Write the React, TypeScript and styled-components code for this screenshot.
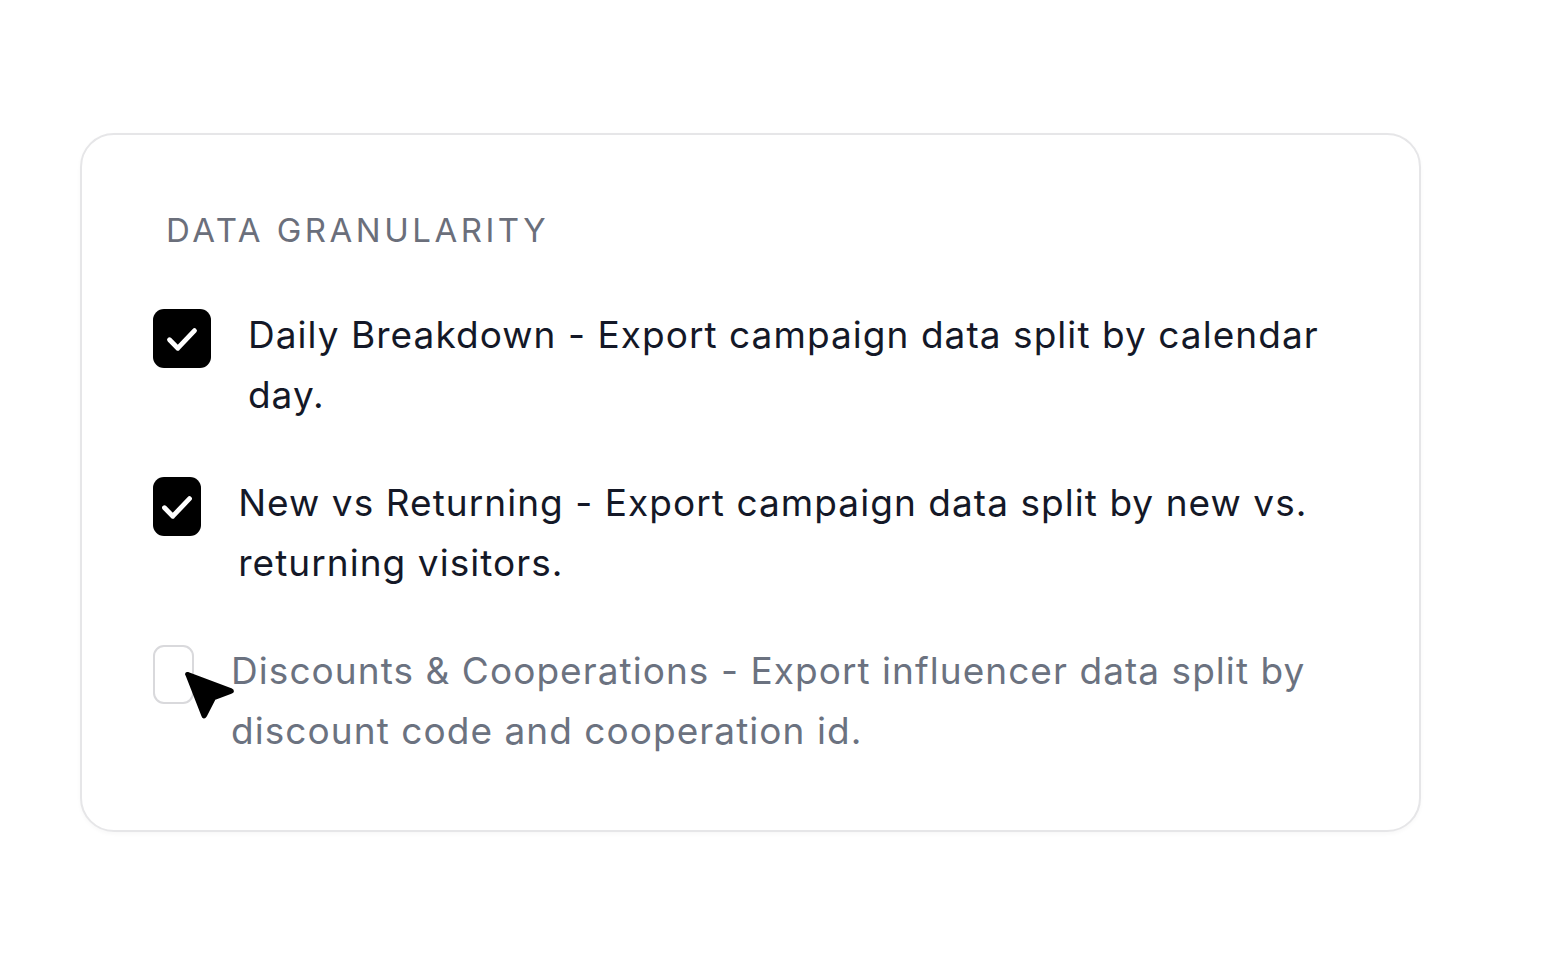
import React, { useState } from 'react'
import styled, { createGlobalStyle } from 'styled-components'

const GlobalStyle = createGlobalStyle`
  html, body {
    margin: 0;
    padding: 0;
    background: #ffffff;
    font-family: Inter, 'Noto Sans', sans-serif;
  }
`

const Page = styled.div`
  width: 1560px;
  height: 960px;
  padding: 133px 0 0 80px;
  box-sizing: border-box;
`

const Card = styled.section`
  position: relative;
  width: 1341px;
  box-sizing: border-box;
  border: 2px solid #e6e6e8;
  border-radius: 34px;
  background: #ffffff;
  box-shadow: 0 2px 4px rgba(0, 0, 0, 0.03);
  padding: 71px 71px 69px 71px;
`

const Heading = styled.h3`
  margin: 0 0 51px 13px;
  font-size: 33px;
  line-height: 48px;
  font-weight: 400;
  letter-spacing: 3.5px;
  color: #6b6f7b;
  text-transform: uppercase;
`

const List = styled.div`
  display: flex;
  flex-direction: column;
  gap: 48px;
`

const Row = styled.label<{ $muted?: boolean }>`
  display: flex;
  align-items: flex-start;
  gap: 37px;
  cursor: pointer;
  color: ${(p) => (p.$muted ? '#6b7280' : '#141827')};
`

const Box = styled.span<{ $checked: boolean }>`
  flex: 0 1 61px;
  width: 61px;
  height: 59px;
  margin-top: 4px;
  box-sizing: border-box;
  border-radius: 11px;
  display: flex;
  align-items: center;
  justify-content: center;
  background: ${(p) => (p.$checked ? '#000000' : '#ffffff')};
  border: ${(p) => (p.$checked ? 'none' : '2px solid #d9d9dc')};
  overflow: hidden;
`

const Text = styled.span`
  font-size: 37px;
  line-height: 60px;
  font-weight: 400;
  letter-spacing: 1.05px;
`

const Pointer = styled.svg`
  position: absolute;
  left: 101px;
  top: 535px;
  width: 52px;
  height: 52px;
  pointer-events: none;
`

const Check = () => (
  <svg width="40" height="40" viewBox="0 0 24 24" fill="none" stroke="#fff" strokeWidth="2.9" strokeLinecap="round" strokeLinejoin="round">
    <path d="M4.5 12.5l5 5L19.5 7" />
  </svg>
)

const options = [
  { label: 'Daily Breakdown - Export campaign data split by calendar day.', checked: true },
  { label: 'New vs Returning - Export campaign data split by new vs. returning visitors.', checked: true },
  { label: 'Discounts & Cooperations - Export influencer data split by discount code and cooperation id.', checked: false },
]

export default function App() {
  const [state, setState] = useState(options.map((o) => o.checked))
  return (
    <>
      <GlobalStyle />
      <Page>
        <Card>
          <Heading>Data Granularity</Heading>
          <List>
            {options.map((o, i) => (
              <Row
                key={o.label}
                $muted={!state[i]}
                onClick={() => setState(state.map((s, j) => (j === i ? !s : s)))}
              >
                <Box $checked={state[i]}>{state[i] && <Check />}</Box>
                <Text>{o.label}</Text>
              </Row>
            ))}
          </List>
          <Pointer viewBox="0 0 50 50">
            <path
              d="M4 5 Q2.5 3 5 3.5 L46 19 Q49 20.5 46 21.5 L30 27.5 L21.5 44 Q20 46.5 19 43.5 Z"
              fill="#000"
              stroke="#000"
              strokeWidth="3"
              strokeLinejoin="round"
            />
          </Pointer>
        </Card>
      </Page>
    </>
  )
}
